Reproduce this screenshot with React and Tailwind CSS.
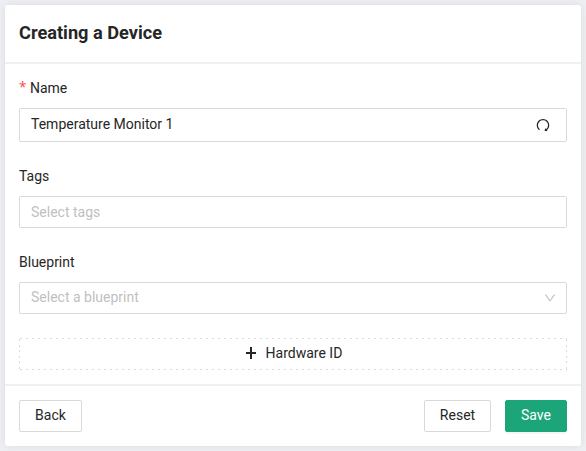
import React from "react";
import { AiOutlineRedo, AiOutlineDown } from "react-icons/ai";

function Label({ required, children }) {
  return (
    <label className="flex h-[22px] items-center leading-[22px]">
      {required && <span className="mr-[3.5px] font-['Noto_Sans',sans-serif] text-[13.5px] leading-none text-[#ff4d4f]">*</span>}
      {children}
    </label>
  );
}

function Button({ className, children }) {
  return (
    <button className={"flex h-8 items-center justify-center rounded-[2px] border pb-[2px] " + className}>
      {children}
    </button>
  );
}

// Horizontal run of 2px dashes, 6px apart.
function DashRow() {
  return <div className="h-px w-full bg-[repeating-linear-gradient(90deg,transparent_0_1px,#d9d9d9_1px_3px,transparent_3px_6px)]" />;
}

// Vertical run of dashes along a side edge.
function DashColumn() {
  return <div className="w-px self-stretch bg-[repeating-linear-gradient(180deg,#d9d9d9_0_2px,transparent_2px_5.6px)]" />;
}

export default function App() {
  return (
    <div className="h-[451px] w-[586px] bg-[#eeeff3] p-[5px] font-[Roboto,sans-serif] text-[14px] text-[#262626]">
      <div className="flex h-[441px] flex-col rounded-[3px] bg-white shadow-[0_0_8px_rgba(0,0,0,0.08)]">
        <header className="flex h-[59px] items-center border-b-2 border-[#f0f0f0] px-[14px] pb-[2px]">
          <h1 className="text-[18.2px] font-bold leading-6">Creating a Device</h1>
        </header>
        <main className="flex h-[322px] flex-col border-b-2 border-[#f0f0f0] px-[14px] pt-[13px]">
          <Label required>Name</Label>
          <div className="mt-[9px] flex h-[34px] w-[548px] items-center justify-between rounded-[2px] border border-[#d9d9d9] pl-[11px] pr-[15px]">
            <span className="pb-[2px]">Temperature Monitor 1</span>
            <AiOutlineRedo size={16} />
          </div>
          <div className="mt-[23px]"><Label>Tags</Label></div>
          <div className="mt-[9px] flex h-8 w-[548px] items-center rounded-[2px] border border-[#d9d9d9] px-[11px] text-[#bfbfbf]">
            Select tags
          </div>
          <div className="mt-[23px]"><Label>Blueprint</Label></div>
          <div className="mt-[9px] flex h-8 w-[548px] items-center justify-between rounded-[2px] border border-[#d9d9d9] pl-[11px] pr-[9px] text-[#bfbfbf]">
            <span className="pb-[2px]">Select a blueprint</span>
            <AiOutlineDown size={14} />
          </div>
          <button className="mt-6 flex h-8 w-[548px] flex-col rounded-[2px]">
            <DashRow />
            <span className="flex h-[30px] w-full items-center">
              <DashColumn />
              <span className="flex flex-1 items-center justify-center gap-[9px] pb-[2px] pl-[1px]">
                <svg width="12" height="12" viewBox="0 0 12 12" className="mb-px" shapeRendering="crispEdges" fill="currentColor">
                  <path d="M5 0h2v12H5zM1 5h10v2H1z" />
                </svg>
                <span>Hardware ID</span>
              </span>
              <DashColumn />
            </span>
            <DashRow />
          </button>
        </main>
        <footer className="flex h-[60px] items-start px-[14px] pt-[14px]">
          <Button className="w-[63px] border-[#d9d9d9]">Back</Button>
          <Button className="ml-auto w-[67px] border-[#d9d9d9]">Reset</Button>
          <Button className="ml-[14px] w-[62px] border-[#1da57a] bg-[#1da57a] text-white shadow-[0_2px_0_rgba(0,0,0,0.04)]">Save</Button>
        </footer>
      </div>
    </div>
  );
}
